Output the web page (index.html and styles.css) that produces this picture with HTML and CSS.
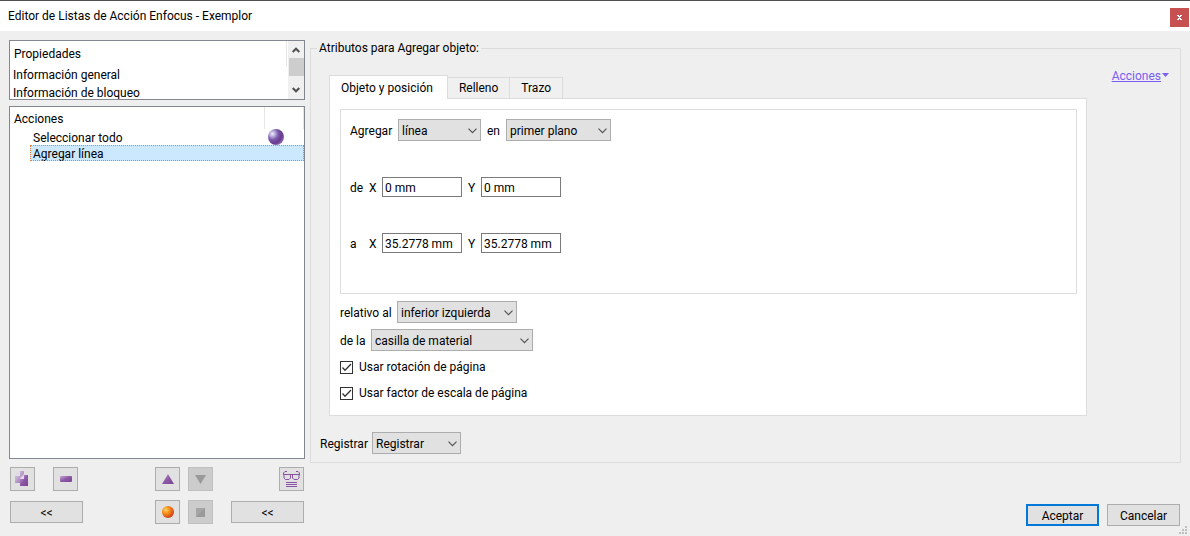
FILE: index.html
```html
<!DOCTYPE html>
<html lang="es">
<head>
<meta charset="utf-8">
<title>Editor de Listas de Acción Enfocus - Exemplor</title>
<link rel="stylesheet" href="styles.css">
</head>
<body>
<svg class="defs" aria-hidden="true">
  <symbol id="chevron" viewBox="0 0 9 6"><path d="M.5 .7L4.5 4.7L8.500 .7" fill="none" stroke="#505050" stroke-width="1.1"/></symbol>
  <symbol id="scroll-arrow" viewBox="0 0 8 6"><path d="M.7 5L4 1.700L7.300 5" fill="none" stroke="#505050" stroke-width="2"/></symbol>
</svg>
<header class="titlebar">
  <h1 class="title">Editor de Listas de Acción Enfocus - Exemplor</h1>
  <button class="close" type="button" aria-label="Cerrar"><svg width="5" height="5" viewBox="0 0 5 5"><path d="M0 0h2v1h1v-1h2v1h-1v1h-1v1h1v1h1v1h-2v-1h-1v1h-2v-1h1v-1h1v-1h-1v-1h-1z" fill="#fff"/></svg></button>
</header>
<main class="window">
  <aside class="sidebar">
    <section class="list properties">
      <div class="properties-body">
        <h2 class="list-head properties-head">Propiedades</h2>
        <ul class="items">
          <li class="property">Información general</li>
          <li class="property">Información de bloqueo</li>
        </ul>
      </div>
      <div class="scrollbar">
        <svg class="arrow" width="8" height="6"><use href="#scroll-arrow"/></svg>
        <span class="thumb"></span>
        <svg class="arrow arrow-down" width="8" height="6"><use href="#scroll-arrow"/></svg>
      </div>
    </section>
    <section class="list actions">
      <div class="actions-head"><h2 class="list-head">Acciones</h2><span class="head-cell"></span></div>
      <ul class="items">
        <li class="action">Seleccionar todo
          <svg class="orb" width="18" height="16" viewBox="0 0 18 16">
            <defs><radialGradient id="purple" cx=".28" cy=".3" r=".75"><stop offset="0" stop-color="#f4f0fc"/><stop offset=".22" stop-color="#b9acdb"/><stop offset=".5" stop-color="#7a58a8"/><stop offset=".8" stop-color="#67398f"/><stop offset="1" stop-color="#8a60b0"/></radialGradient></defs>
            <circle cx="9" cy="8" r="8" fill="url(#purple)"/>
          </svg>
        </li>
        <li class="action selected">Agregar línea</li>
      </ul>
    </section>
    <div class="tools">
      <div class="tool-row">
        <button class="tool" type="button" aria-label="Duplicar">
          <svg width="15" height="16" viewBox="0 0 15 16">
            <defs><linearGradient id="violet" x1="0" y1="0" x2="1" y2="1"><stop offset="0" stop-color="#c4a8d4"/><stop offset=".5" stop-color="#8c58a4"/><stop offset="1" stop-color="#7d4598"/></linearGradient>
            <linearGradient id="pale" x1="0" y1="0" x2="1" y2="1"><stop offset="0" stop-color="#e0d4e8"/><stop offset="1" stop-color="#9468ae"/></linearGradient></defs>
            <path d="M0 5L5 0H9V3L5 7V12H0z" fill="url(#pale)"/>
            <path d="M5 8L9 4H13V15H5z" fill="url(#violet)"/>
            <path d="M5 8L9 4V8z" fill="#e6dbec"/>
            <path d="M0 5L5 0V5z" fill="#e4dae9"/>
          </svg></button>
        <button class="tool tool-remove" type="button" aria-label="Eliminar"><svg width="12" height="6"><rect width="12" height="6" rx="1" fill="url(#violet)"/></svg></button>
        <button class="tool tool-mid" type="button" aria-label="Subir"><svg width="12" height="10"><path d="M6 0L12 10H0z" fill="url(#violet)"/></svg></button>
        <button class="tool" type="button" aria-label="Bajar" disabled><svg width="11" height="9"><path d="M0 0H11L5.500 9z" fill="#999"/></svg></button>
        <button class="tool tool-view" type="button" aria-label="Ver descripción">
          <svg width="17" height="17" viewBox="0 0 17 17" fill="none" stroke="#8752a2">
            <path d="M4 .5H2L.5 2V4M13 .5H15L16.500 2V4M.5 3.500H16.500M1 4V7L2.500 8.500H6L7.500 7V4M9.500 4V7L11 8.500H14.500L16 7V4M3 11.500H14M3 13.500H14M3 15.500H14"/>
          </svg></button>
      </div>
      <div class="tool-row">
        <button class="wide" type="button">&lt;&lt;</button>
        <button class="tool tool-mid" type="button" aria-label="Grabar">
          <svg width="12" height="12"><defs><radialGradient id="orange" cx=".33" cy=".33" r=".75"><stop offset="0" stop-color="#ffd070"/><stop offset=".35" stop-color="#f79a1e"/><stop offset=".7" stop-color="#e2601a"/><stop offset="1" stop-color="#c03c18"/></radialGradient></defs><circle cx="6" cy="6" r="6" fill="url(#orange)"/></svg></button>
        <button class="tool" type="button" aria-label="Detener" disabled><svg width="9" height="9"><path d="M0 0H9V9H0z" fill="#999"/><path d="M0 0H9L0 9z" fill="#a5a5a5"/></svg></button>
        <button class="wide wide-end" type="button">&lt;&lt;</button>
      </div>
    </div>
  </aside>

  <form class="content">
    <fieldset class="attributes">
      <legend class="legend">Atributos para Agregar objeto:</legend>
      <div class="editor">
        <div class="tabs-area">
          <div class="tabs" role="tablist">
            <button class="tab active" type="button" role="tab" aria-selected="true">Objeto y posición</button>
            <button class="tab" type="button" role="tab" aria-selected="false">Relleno</button>
            <button class="tab" type="button" role="tab" aria-selected="false">Trazo</button>
          </div>
          <div class="panel" role="tabpanel">
            <div class="group">
              <div class="row">
                <label class="add-label" for="shape">Agregar</label>
                <span class="combo combo-shape"><select id="shape"><option>línea</option></select><svg class="chevron"><use href="#chevron"/></svg></span>
                <label class="in-label" for="layer">en</label>
                <span class="combo combo-layer"><select id="layer"><option>primer plano</option></select><svg class="chevron"><use href="#chevron"/></svg></span>
              </div>
              <div class="row">
                <span class="point">de</span>
                <label class="axis" for="x1">X</label><input class="field" id="x1" type="text" value="0 mm">
                <label class="axis axis-y" for="y1">Y</label><input class="field" id="y1" type="text" value="0 mm">
              </div>
              <div class="row">
                <span class="point">a</span>
                <label class="axis" for="x2">X</label><input class="field" id="x2" type="text" value="35.2778 mm">
                <label class="axis axis-y" for="y2">Y</label><input class="field" id="y2" type="text" value="35.2778 mm">
              </div>
            </div>
            <div class="row">
              <label class="relative-label" for="corner">relativo al</label>
              <span class="combo combo-corner"><select id="corner"><option>inferior izquierda</option></select><svg class="chevron"><use href="#chevron"/></svg></span>
            </div>
            <div class="row">
              <label class="of-label" for="box">de la</label>
              <span class="combo combo-box"><select id="box"><option>casilla de material</option></select><svg class="chevron"><use href="#chevron"/></svg></span>
            </div>
            <div class="checks">
              <label class="check"><span class="tick"><input type="checkbox" checked><svg class="mark" viewBox="0 0 13 13"><path d="M2.500 6.500L5 9.200L11 3" fill="none" stroke="#333" stroke-width="1.300"/></svg></span>Usar rotación de página</label>
              <label class="check"><span class="tick"><input type="checkbox" checked><svg class="mark" viewBox="0 0 13 13"><path d="M2.500 6.500L5 9.200L11 3" fill="none" stroke="#333" stroke-width="1.300"/></svg></span>Usar factor de escala de página</label>
            </div>
          </div>
        </div>
        <a class="menu-link" href="#"><span class="menu-text">Acciones</span><svg class="menu-arrow" width="7" height="4"><path d="M0 0H7L3.500 4z" fill="#7b5cf5"/></svg></a>
      </div>
      <div class="row log">
        <label class="log-label" for="log">Registrar</label>
        <span class="combo combo-log"><select id="log"><option>Registrar</option></select><svg class="chevron"><use href="#chevron"/></svg></span>
      </div>
    </fieldset>
    <div class="footer">
      <button class="wide default" type="button">Aceptar</button>
      <button class="wide" type="button">Cancelar</button>
    </div>
  </form>
  <svg class="grip" width="8" height="8"><path d="M6 0h2v2h-2zM3 3h2v2h-2zM6 3h2v2h-2zM0 6h2v2h-2zM3 6h2v2h-2zM6 6h2v2h-2z" fill="#bfbfbf"/></svg>
</main>
</body>
</html>
```
FILE: styles.css
```css
* { box-sizing: border-box; }
body {
  margin: 0;
  min-height: 100vh;
  display: flex;
  flex-direction: column;
  background: #efefef;
  color: #000;
  font: 12px/16px Roboto, "Open Sans", sans-serif;
}
button, input, select { font: inherit; color: inherit; margin: 0; }
button { display: flex; align-items: center; justify-content: center; padding: 0; }
svg { display: block; flex: none; }
h1, h2 { margin: 0; font: inherit; }
.defs { position: absolute; width: 0; height: 0; }

.titlebar {
  display: flex;
  align-items: center;
  justify-content: space-between;
  height: 31px;
  padding: 0 1px 0 8px;
  border-top: 1px solid #504e50;
  background: #fff;
}
.close { width: 19px; height: 19px; margin-top: 3px; border: 0; background: #c75050; }

.window {
  position: relative;
  flex: 1;
  display: flex;
  gap: 5px;
  padding: 9px 9px 10px;
}
.sidebar { flex: none; width: 296px; display: flex; flex-direction: column; padding-bottom: 2px; }
.list { background: #fff; border: 1px solid #828790; }
.properties { display: flex; height: 60px; margin-bottom: 6px; overflow: hidden; }
.properties-body { flex: 1; }
.properties-head { height: 25px; padding-top: 5px; border-right: 1px solid #e5e5e5; margin-right: 1px; }
.list-head { padding-left: 4px; }
.items { margin: 0; padding: 0; list-style: none; }
.property { padding-left: 3px; line-height: 18px; white-space: nowrap; }
.scrollbar {
  width: 16px;
  display: flex;
  flex-direction: column;
  align-items: center;
  padding: 6px 1px;
  background: #f0f0f0;
}
.thumb { width: 15px; height: 18px; margin: 5px 0 auto; background: #cdcdcd; }
.arrow-down { transform: rotate(180deg); }
.actions { flex: 1; }
.actions-head { display: flex; justify-content: space-between; align-items: flex-start; height: 22px; }
.actions-head .list-head { padding-top: 4px; }
.head-cell { width: 40px; height: 22px; border: solid #e5e5e5; border-width: 0 1px; }
.action {
  display: flex;
  justify-content: space-between;
  height: 16px;
  margin-left: 20px;
  padding: 0 19px 0 3px;
  line-height: 18px;
}
.selected { background: #cce8ff; outline: 1px dotted #f08030; outline-offset: -1px; }

.tools { display: flex; flex-direction: column; gap: 9px; padding: 8px 1px 0; }
.tool-row { display: flex; align-items: center; }
.tool, .wide { border: 1px solid #adadad; background: #e1e1e1; }
.tool { width: 25px; height: 24px; }
.tool:disabled { background: #ccc; border-color: #bfbfbf; }
.tool-remove { margin-left: 18px; }
.tool-mid { margin: 0 8px 0 auto; }
.tool-remove + .tool-mid { margin-left: 77px; }
.tool-view { margin-left: auto; }
.wide { width: 73px; height: 22px; padding-top: 2px; }
.wide-end { margin-left: 18px; }

.content { flex: 1; min-width: 0; display: flex; flex-direction: column; }
.attributes { margin: 0; padding: 18px 9px 8px; border: 1px solid #dcdcdc; min-width: 0; flex: none; }
.legend { padding: 0 2px; margin-left: -3px; line-height: 17px; }
.editor { display: flex; align-items: flex-start; padding: 0 2px 0 9px; }
.tabs-area { flex: 1; min-width: 0; }
.tabs { display: flex; align-items: flex-end; }
.tab {
  height: 21px;
  padding: 0 11px;
  border: 1px solid #dcdcdc;
  border-width: 1px 1px 0 0;
  background: #f0f0f0;
}
.tab.active { position: relative; height: 24px; margin-bottom: -1px; border-width: 1px 1px 0; background: #fff; padding: 0 14px 0 11px; }
.panel { padding: 10px 9px 14px 10px; border: 1px solid #dcdcdc; background: #fff; }
.group { display: flex; flex-direction: column; gap: 36px; padding: 9px 9px 40px; margin-bottom: 7px; border: 1px solid #dcdcdc; }
.row { display: flex; align-items: center; }
.row label, .point { padding-top: 2px; }
.panel > .row + .row { margin-top: 6px; }
.combo { position: relative; height: 22px; }
.combo select {
  display: block;
  width: 100%;
  height: 22px;
  padding: 2px 20px 0 3px;
  border: 1px solid #adadad;
  border-radius: 0;
  background: #e1e1e1;
  appearance: none;
}
.chevron { position: absolute; right: 4px; top: 9px; width: 9px; height: 6px; pointer-events: none; }
.combo-shape { width: 83px; }
.combo-layer { width: 105px; }
.combo-corner { width: 120px; }
.combo-box { width: 162px; }
.combo-log { width: 89px; }
.add-label { width: 48px; }
.in-label { width: 25px; padding-left: 6px; }
.relative-label { width: 57px; }
.of-label { width: 31px; }
.log-label { width: 52px; }
.point { width: 19px; }
.axis { width: 13px; }
.axis-y { width: 19px; padding-left: 6px; }
.field { width: 80px; height: 20px; padding: 2px 2px 0; border: 1px solid #7a7a7a; background: #fff; }
.checks { display: flex; flex-direction: column; gap: 10px; padding-top: 8px; }
.check { display: flex; align-items: center; gap: 6px; }
.tick { position: relative; width: 13px; height: 13px; }
.tick input { display: block; width: 13px; height: 13px; border: 1px solid #333; background: #fff; appearance: none; }
.mark { position: absolute; inset: 0; pointer-events: none; }
input:not(:checked) + .mark { display: none; }
.menu-link { display: flex; gap: 1px; margin: -7px 0 0 25px; color: #7b5cf5; text-decoration: none; }
.menu-text { text-decoration: underline; }
.menu-arrow { margin-top: 5px; }
.log { margin-top: 16px; }
.footer { display: flex; justify-content: flex-end; gap: 8px; margin-top: auto; padding: 8px 1px 0 0; }
.default { border: 2px solid #0078d7; }
.grip { position: absolute; right: 3px; bottom: 2px; }
```
